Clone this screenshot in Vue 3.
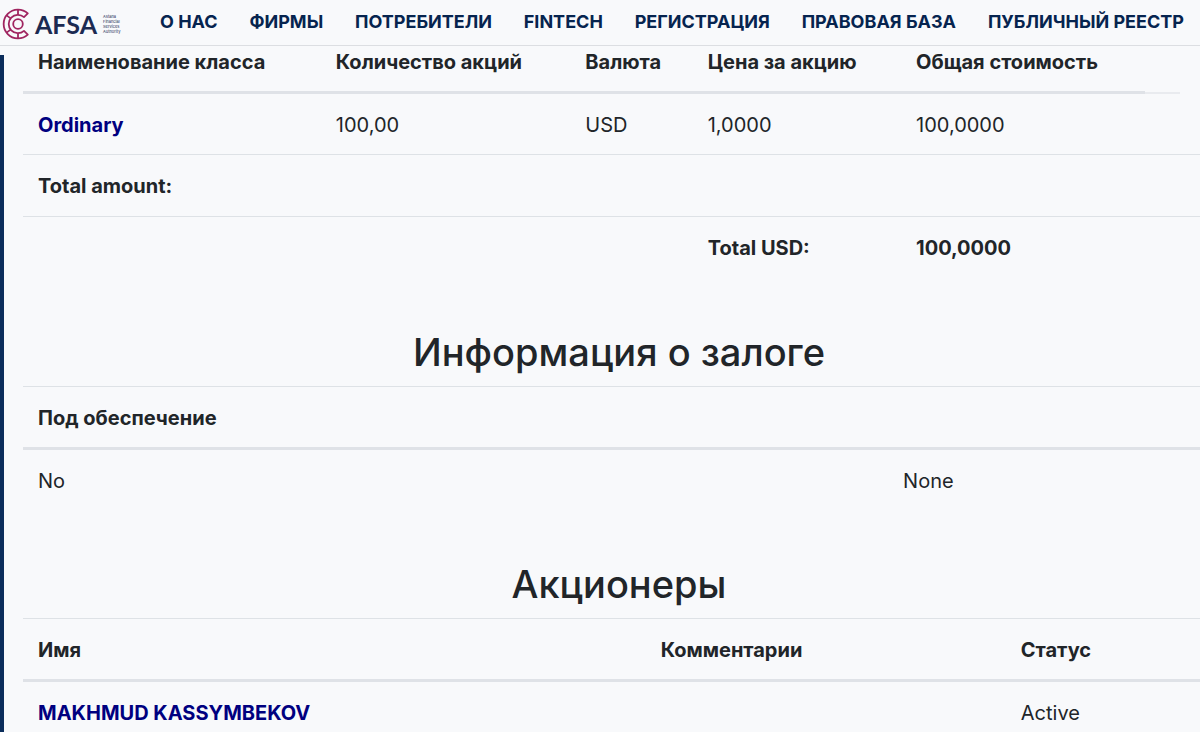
<script setup>
const links = ['О НАС', 'ФИРМЫ', 'ПОТРЕБИТЕЛИ', 'FINTECH', 'РЕГИСТРАЦИЯ', 'ПРАВОВАЯ БАЗА', 'ПУБЛИЧНЫЙ РЕЕСТР']
const shares = [{ name: 'Ordinary', count: '100,00', currency: 'USD', price: '1,0000', total: '100,0000' }]
const holders = [{ name: 'MAKHMUD KASSYMBEKOV', comment: '', status: 'Active' }]
</script>

<template>
  <div class="page">
    <header class="topbar">
      <a class="logo" href="#" aria-label="AFSA">
        <svg class="mark" viewBox="0 0 28 32" aria-hidden="true">
          <g fill="none" stroke="#a02560" stroke-width="1.8" stroke-linejoin="round">
            <path d="M24.8 5.4A14.4 14.4 0 1 0 24.8 26.6L21 22.9A9.2 9.2 0 1 1 21 9.1Z" />
            <circle cx="15" cy="16" r="4.8" />
            <path d="M15 1.6V6.8M3.6 7.4L7.6 10.4M3.6 24.6L7.6 21.6M15 25.2V30.4" />
          </g>
        </svg>
        <span class="brand">AFSA</span>
        <span class="tagline">Astana<br>Financial<br>Services<br>Authority</span>
      </a>
      <nav class="nav">
        <a v-for="l in links" :key="l" href="#">{{ l }}</a>
      </nav>
    </header>

    <main class="content">
      <table class="shares">
        <colgroup>
          <col class="s1"><col class="s2"><col class="s3"><col class="s4"><col class="s5"><col class="s6"><col>
        </colgroup>
        <thead>
          <tr>
            <th>Наименование класса</th>
            <th>Количество акций</th>
            <th>Валюта</th>
            <th>Цена за акцию</th>
            <th>Общая стоимость</th>
            <td class="thin"></td>
            <td></td>
          </tr>
        </thead>
        <tbody>
          <tr v-for="s in shares" :key="s.name">
            <td><a href="#">{{ s.name }}</a></td>
            <td>{{ s.count }}</td>
            <td>{{ s.currency }}</td>
            <td>{{ s.price }}</td>
            <td colspan="3">{{ s.total }}</td>
          </tr>
          <tr><th colspan="7">Total amount:</th></tr>
          <tr>
            <td colspan="3"></td>
            <th>Total USD:</th>
            <th colspan="3">100,0000</th>
          </tr>
        </tbody>
      </table>

      <h2>Информация о залоге</h2>
      <table>
        <colgroup><col class="p1"><col></colgroup>
        <thead>
          <tr><th colspan="2">Под обеспечение</th></tr>
        </thead>
        <tbody>
          <tr><td>No</td><td>None</td></tr>
        </tbody>
      </table>

      <h2>Акционеры</h2>
      <table>
        <colgroup><col class="h1"><col class="h2"><col></colgroup>
        <thead>
          <tr><th>Имя</th><th>Комментарии</th><th>Статус</th></tr>
        </thead>
        <tbody>
          <tr v-for="h in holders" :key="h.name">
            <td><a href="#">{{ h.name }}</a></td>
            <td>{{ h.comment }}</td>
            <td>{{ h.status }}</td>
          </tr>
        </tbody>
      </table>
    </main>
  </div>
</template>

<style>
body {
  margin: 0;
  background: #f8f9fb;
}
</style>

<style scoped>
.page {
  height: 100vh;
  overflow: hidden;
  display: flex;
  flex-direction: column;
  background: #f8f9fb;
  color: #212529;
  font-family: Inter, "Liberation Sans", sans-serif;
  font-size: 20px;
  line-height: 30px;
}
a {
  text-decoration: none;
}
.topbar {
  flex: none;
  display: flex;
  align-items: center;
  box-sizing: border-box;
  height: 46px;
  padding: 0 16px 0 3px;
  border-bottom: 1px solid #dcdee2;
}
.logo {
  display: flex;
  align-items: center;
  width: 157px;
  padding-top: 3px;
  color: #1b2a52;
}
.mark {
  width: 28px;
  height: 32px;
  overflow: visible;
}
.brand {
  margin-left: 4px;
  font: 700 25px/30px Lato, sans-serif;
}
.tagline {
  margin-left: 6px;
  font-size: 4px;
  line-height: 5px;
}
.nav {
  flex: 1;
  display: flex;
  justify-content: space-between;
  padding-bottom: 2px;
}
.nav a {
  color: #06244f;
  font-size: 18px;
  font-weight: 700;
  white-space: nowrap;
}
.content {
  flex: 1;
  padding-left: 23px;
  background: linear-gradient(#0b2d5b, #0b2d5b) 0 9px / 4px 100% no-repeat;
}
table {
  width: 100%;
  table-layout: fixed;
  border-collapse: separate;
  border-spacing: 0;
}
th, td {
  height: 30px;
  padding: 16px 0 15px 15px;
  border-top: 1px solid #dee2e6;
  text-align: left;
  font-weight: 400;
  white-space: nowrap;
}
th, td a {
  font-weight: 700;
}
td a {
  color: #000080;
}
thead th {
  padding-bottom: 14px;
  border-bottom: 3px solid #dfe2e7;
}
tbody tr:first-child td {
  padding-bottom: 14px;
  border-top: 0;
}
.shares thead th {
  padding-top: 1px;
  border-top: 0;
}
.shares thead td {
  padding: 0;
  border-top: 0;
}
.shares .thin {
  border-bottom: 2px solid #e9ebef;
}
.s1 { width: 25.3%; }
.s2 { width: 21.2%; }
.s3 { width: 10.4%; }
.s4 { width: 17.7%; }
.s5 { width: 20.7%; }
.s6 { width: 3%; }
.p1 { width: 73.5%; }
.h1 { width: 52.9%; }
.h2 { width: 30.6%; }
h2 {
  margin: 0;
  padding: 50px 0 10px 15px;
  font-size: 38px;
  line-height: 48px;
  font-weight: 500;
  text-align: center;
}
</style>
